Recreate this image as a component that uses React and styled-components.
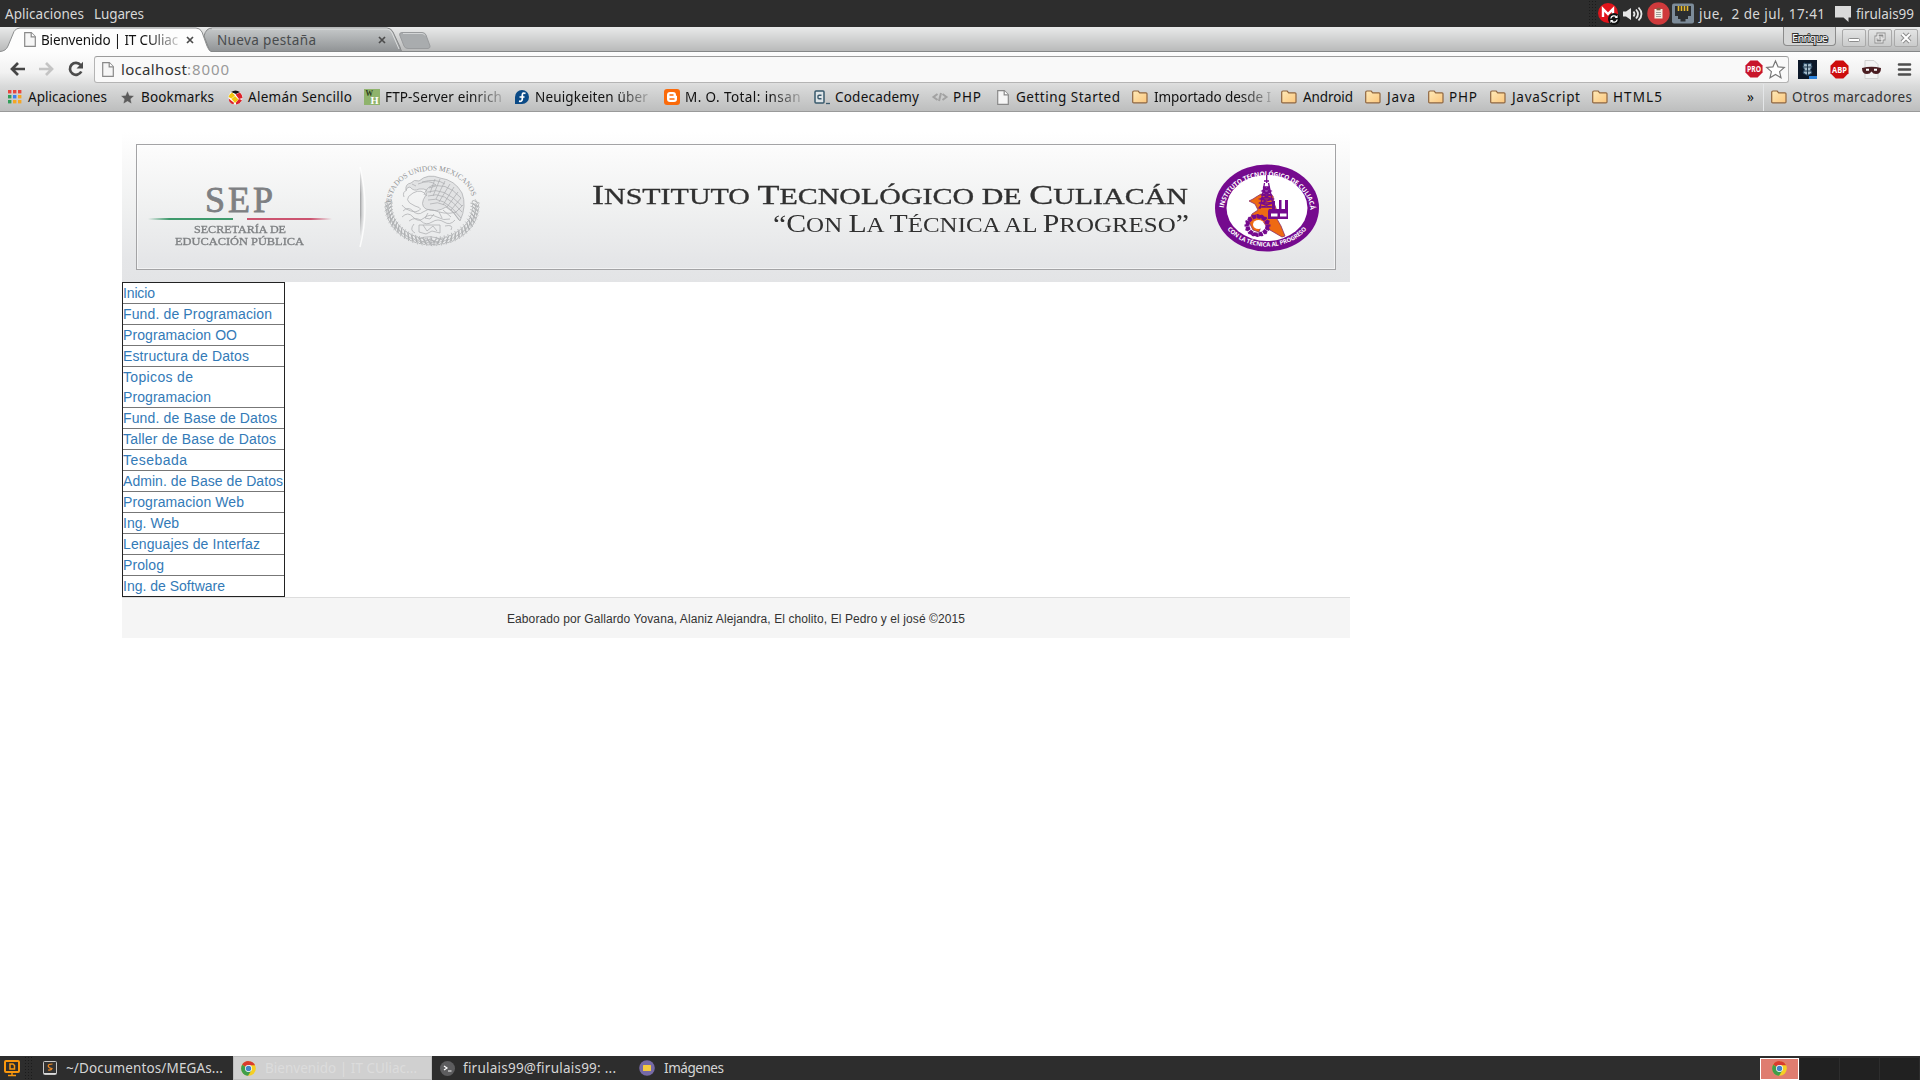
import React, { useLayoutEffect, useRef } from "react";
import styled, { createGlobalStyle, css } from "styled-components";

const Global = createGlobalStyle`
  html, body { margin: 0; padding: 0; background: #fff; }
  *, *::before, *::after { box-sizing: border-box; }
  svg { display: block; flex: none; overflow: visible; }
`;

const Screen = styled.div`
  width: 1920px;
  height: 1080px;
  overflow: hidden;
  display: flex;
  flex-direction: column;
  background: #fff;
  font-family: "Noto Sans", "Open Sans", sans-serif;
  font-size: 13.5px;
`;

/* ---------- text fitted to a known width ---------- */
const FitBox = styled.span`
  display: block;
  flex: none;
  width: ${(p) => p.$w}px;
  margin-left: ${(p) => p.$ml || 0}px;
  white-space: pre;
  color: ${(p) => p.$color || "inherit"};
  font-size: ${(p) => (p.$size ? p.$size + "px" : "inherit")};
  ${(p) => p.$fade && css`
    mask-image: linear-gradient(90deg, #000 calc(100% - 30px), rgba(0, 0, 0, 0.2) 100%);
  `}
`;
const FitInner = styled.span`
  display: inline-block;
  transform-origin: 0 50%;
`;

function Fit({ w, ml, size, color, fade, stretch, children }) {
  const ref = useRef(null);
  useLayoutEffect(() => {
    const el = ref.current;
    el.style.letterSpacing = "0px";
    el.style.transform = "none";
    const natural = el.getBoundingClientRect().width;
    const n = el.textContent.length;
    if (stretch) el.style.transform = `scaleX(${w / natural})`;
    else el.style.letterSpacing = `${(w - natural) / Math.max(1, n - (fade ? 0 : 1))}px`;
  }, [w, fade, stretch]);
  return (
    <FitBox $w={w} $ml={ml} $size={size} $color={color} $fade={fade}>
      <FitInner ref={ref}>{children}</FitInner>
    </FitBox>
  );
}

/* ---------- desktop panel ---------- */
const Panel = styled.header`
  height: 27px;
  flex: none;
  display: flex;
  align-items: flex-start;
  padding: 0 6px 0 5px;
  background: #2d2d2d;
  color: #d8d8d8;
  line-height: 29px;
`;
const Spacer = styled.div`
  flex: 1;
`;
const Tray = styled.div`
  display: flex;
  align-items: flex-start;
  height: 27px;
`;
const TrayIcon = styled.div`
  width: ${(p) => p.$w}px;
  height: 27px;
  display: flex;
  align-items: center;
  padding-left: ${(p) => p.$pl || 0}px;
`;
const Grip = styled.div`
  width: 10px;
  height: 100%;
  background-image: radial-gradient(#1b1b1b 0.8px, transparent 1px);
  background-size: 3px 3px;
`;
const Slot = styled.div`
  width: ${(p) => p.$w}px;
  flex: none;
  display: flex;
  align-items: center;
`;

const MegaIcon = () => (
  <svg width="22" height="22" viewBox="0 0 22 22">
    <circle cx="10" cy="10" r="10" fill="#e1141b" />
    <path d="M5 14V6l5 5 5-5v5" fill="none" stroke="#fff" strokeWidth="2.4" />
    <circle cx="16" cy="16" r="6" fill="#111" />
    <path d="M12.8 15.5a3.3 3.3 0 0 1 5.6-1.7M19.2 16.5a3.3 3.3 0 0 1-5.6 1.7" fill="none" stroke="#fff" strokeWidth="1.3" />
    <path d="M19.6 12v3h-3zM12.4 20v-3h3z" fill="#fff" />
  </svg>
);
const SpeakerIcon = () => (
  <svg width="20" height="16" viewBox="0 0 20 16">
    <path d="M0 5.5h3L8 2v12l-5-3.500H0z" fill="#e6e6e6" />
    <path d="M10.500 5.500q2 2.500 0 5M13 3.500q4 4.500 0 9M15.500 1.500q6 6.500 0 13" fill="none" stroke="#e6e6e6" strokeWidth="1.8" />
  </svg>
);
const ClipIcon = () => (
  <svg width="23" height="23" viewBox="0 0 23 23">
    <circle cx="11.500" cy="11.500" r="11.200" fill="#cf3a3c" />
    <rect x="7.500" y="7" width="8" height="9.500" fill="#f4f0e4" />
    <rect x="9.500" y="5.800" width="4" height="2.500" fill="#8a5a40" />
    <path d="M9 10.500h5M9 12.500h5M9 14.500h5" stroke="#888" strokeWidth="0.8" />
  </svg>
);
const EthernetIcon = () => (
  <svg width="22" height="21" viewBox="0 0 22 21">
    <rect x="0" y="0.500" width="22" height="20" rx="2" fill="#7c8b99" />
    <path d="M3 3h16v10h-3v3h-2.500v2.500h-5V16H6v-3H3z" fill="#2a2d30" />
    <path d="M6.500 3v5M9.500 3v5M12.500 3v5M15.500 3v5" stroke="#e8b92c" strokeWidth="1.600" />
  </svg>
);
const ChatIcon = () => (
  <svg width="16" height="16" viewBox="0 0 16 16">
    <path d="M0 0h16v11.500h-2.500V16L8.500 11.500H0z" fill="#dadada" />
  </svg>
);

/* ---------- tab strip ---------- */
const TabStrip = styled.div`
  height: 25px;
  flex: none;
  display: flex;
  background: linear-gradient(#e9eaea, #b9baba 96%, #858788 97%);
`;
const Tab = styled.div`
  display: grid;
  width: ${(p) => p.$w}px;
  margin-left: ${(p) => p.$ml || 0}px;
  z-index: ${(p) => (p.$front ? 2 : 1)};
  & > * { grid-area: 1 / 1; }
`;
const TabBody = styled.div`
  display: flex;
  align-items: center;
  height: 25px;
  padding-left: ${(p) => p.$pl}px;
  color: ${(p) => p.$color};
`;
const NewTab = styled.div`
  width: 32px;
  padding-top: 5px;
  margin-left: -3px;
  z-index: 1;
`;
const WindowButtons = styled.div`
  display: flex;
  align-items: flex-start;
`;
const Profile = styled.div`
  width: 53px;
  height: 19px;
  display: flex;
  padding-left: 8px;
  margin-right: 6px;
  border: 1px solid #8b8b8b;
  border-top: 0;
  border-radius: 0 0 4px 4px;
  background: #d5d6d6;
  color: #fff;
  font-size: 11px;
  line-height: 21px;
  -webkit-text-stroke: 2px #333;
  paint-order: stroke fill;
`;
const WinButton = styled.div`
  width: 24px;
  height: 18px;
  margin: 2px 2px 0 0;
  display: flex;
  align-items: center;
  justify-content: center;
  border: 1px solid #a9a9a9;
  border-radius: 2px;
  background: linear-gradient(#e3e4e4, #cacbcb);
`;
const CloseX = () => (
  <svg width="8" height="8" viewBox="0 0 8 8">
    <path d="M1 1l6 6M7 1L1 7" stroke="#4c4c4c" strokeWidth="1.700" />
  </svg>
);
const PageIcon = () => (
  <svg width="12" height="15" viewBox="0 0 12 15">
    <path d="M.7.700h6.600l4 4v9.600H.7z" fill="#f6f6f6" stroke="#898989" strokeWidth="1.200" />
    <path d="M7.200.700v4.200h4.200" fill="#fff" stroke="#898989" strokeWidth="1.200" />
  </svg>
);

/* ---------- toolbar ---------- */
const ChromeBars = styled.div`
  height: 60px;
  flex: none;
  display: flex;
  flex-direction: column;
  background: linear-gradient(#fdfdfd 0, #f1f1f1 35%, #d9dada 58%, #bdbebe 100%);
  border-bottom: 1px solid #999a9a;
`;
const Toolbar = styled.div`
  height: 31px;
  padding-top: 4px;
  display: flex;
`;
const Nav = styled.div`
  width: 94px;
  height: 26px;
  padding-left: 10px;
  display: flex;
  align-items: center;
`;
const Omnibox = styled.div`
  width: 1695px;
  height: 27px;
  display: flex;
  align-items: center;
  padding: 0 3px 1px 7px;
  border: 1px solid #b4b4b4;
  border-top-color: #9c9c9c;
  border-radius: 3px;
  background: #f9f9f9;
  line-height: 18px;
`;
const Extensions = styled.div`
  height: 27px;
  flex: 1;
  display: flex;
  align-items: center;
  padding-left: 9px;
`;
const Badge = ({ label, size, fill }) => (
  <svg width={size} height={size} viewBox="0 0 20 20">
    <path d="M6 .5h8L19.500 6v8L14 19.500H6L.5 14V6z" fill={fill} />
    <text x="2.200" y="13.500" textLength="15.600" lengthAdjust="spacingAndGlyphs" fontSize="9.500" fontWeight="700" fill="#fff" fontFamily="Open Sans">
      {label}
    </text>
  </svg>
);

/* ---------- bookmarks ---------- */
const Bookmarks = styled.div`
  height: 28px;
  display: flex;
  align-items: center;
  padding-left: 8px;
  color: #111;
`;
const Bookmark = styled.div`
  width: ${(p) => p.$w}px;
  flex: none;
  display: flex;
  align-items: center;
`;
const Divider = styled.div`
  width: 1px;
  height: 27px;
  margin-right: 7px;
  background: #e4e6e8;
`;

const Folder = () => (
  <svg width="16" height="14" viewBox="0 0 16 14">
    <defs>
      <linearGradient id="fold" x1="0" y1="0" x2="1" y2="1">
        <stop offset="0" stopColor="#ffeab8" />
        <stop offset="1" stopColor="#fbc67c" />
      </linearGradient>
    </defs>
    <path d="M.7 12V2.200Q.7 1 2 1h4.200l1.500 1.800H14q1 0 1 1V12q0 .8-1 .8H1.700q-1 0-1-.8z" fill="url(#fold)" stroke="#8f6640" strokeWidth="1.200" />
  </svg>
);
const AppsIcon = () => {
  const c = ["#e8453c", "#e8453c", "#e8453c", "#2f9e58", "#3a7ff0", "#f5a623", "#2f9e58", "#f5a623", "#f5a623"];
  return (
    <svg width="14" height="14" viewBox="0 0 14 14">
      {c.map((f, i) => (
        <rect key={i} x={(i % 3) * 5} y={Math.floor(i / 3) * 5} width="3.400" height="3.400" fill={f} />
      ))}
    </svg>
  );
};
const StarIcon = ({ size, fill, stroke, w = 1.2 }) => (
  <svg width={size} height={size} viewBox="0 0 20 20">
    <path d="M10 1l2.700 6.200 6.600.6-5 4.400 1.500 6.500L10 15.300l-5.800 3.400 1.500-6.500-5-4.400 6.600-.6z" fill={fill} stroke={stroke} strokeWidth={w} />
  </svg>
);
const BallIcon = () => (
  <svg width="15" height="15" viewBox="0 0 15 15">
    <circle cx="7.500" cy="7.500" r="7" fill="#fff" />
    <path d="M3 2Q7.500-1 12 2L8 4z" fill="#151515" />
    <path d="M.5 7Q1 4 4 2.500L7 5.500 3.500 8.500z" fill="#f3c60e" />
    <path d="M7.500 4.500l4.500-2Q14.500 5 14.500 8L11 9z" fill="#dc2229" />
    <path d="M3.500 9L7 6l3.500 3.500L7 13z" fill="#f3c60e" />
    <path d="M.7 8.500l5.500 4.500-1 1.300Q1 13 .7 8.500z" fill="#dc2229" />
    <path d="M8 12.500l3-3.500 3 1Q12 14 8 14.500z" fill="#dc2229" />
  </svg>
);
const WHIcon = () => (
  <svg width="16" height="16" viewBox="0 0 16 16" fontFamily="Liberation Serif" fontWeight="700">
    <rect width="16" height="16" fill="#8fb36c" />
    <text x="1.500" y="6.500" fontSize="7.500" fill="#2c3a20">W</text>
    <text x="6.500" y="14.500" fontSize="10.500" fill="#fff">H</text>
  </svg>
);
const FedoraIcon = () => (
  <svg width="14" height="14" viewBox="0 0 14 14">
    <path d="M7 0a7 7 0 1 1 0 14H0V7a7 7 0 0 1 7-7z" fill="#0b4a86" />
    <path d="M10.500 3.500Q7.500 2 7.300 5v4.200q-.3 2.600-3.300 2M4.500 7h5" fill="none" stroke="#fff" strokeWidth="1.700" />
  </svg>
);
const BloggerIcon = () => (
  <svg width="16" height="16" viewBox="0 0 16 16">
    <rect width="16" height="16" rx="3" fill="#fb6a0a" />
    <path d="M3 6a3 3 0 0 1 3-3h3a3 3 0 0 1 3 3q0 1 1 1v3a3 3 0 0 1-3 3H6a3 3 0 0 1-3-3z" fill="#fff" />
    <path d="M6 6h3M6 10h4" stroke="#fb6a0a" strokeWidth="1.500" strokeLinecap="round" />
  </svg>
);
const CodeIcon = () => (
  <svg width="17" height="15" viewBox="0 0 17 15">
    <rect x="1" y="1" width="9" height="12" rx="1" fill="#dfe5e8" stroke="#39596c" strokeWidth="1.500" />
    <path d="M7.500 5.200H5a1 1 0 0 0-1 1v1.600a1 1 0 0 0 1 1h2.500" fill="none" stroke="#39596c" strokeWidth="1.400" />
    <path d="M12 13.500h4" stroke="#39596c" strokeWidth="1.300" />
  </svg>
);
const TagIcon = () => (
  <svg width="16" height="10" viewBox="0 0 16 10">
    <path d="M5.500 2L1.500 5l4 3M10.500 2l4 3-4 3M9 1L7 9" fill="none" stroke="#a2a2a2" strokeWidth="2" />
  </svg>
);

const BOOKMARKS = [
  [8, 28, 107, "Aplicaciones", AppsIcon],
  [121, 141, 214, "Bookmarks", () => <StarIcon size={13} fill="#5b5b5b" stroke="#5b5b5b" w={0.4} />],
  [228, 248, 352, "Alemán Sencillo", BallIcon],
  [364, 385, 502, "FTP-Server einrich", WHIcon, true],
  [515, 535, 648, "Neuigkeiten über", FedoraIcon, true],
  [664, 685, 801, "M. O. Total: insan", BloggerIcon, true],
  [814, 835, 919, "Codecademy", CodeIcon],
  [932, 953, 981, "PHP", TagIcon],
  [997, 1016, 1120, "Getting Started", PageIcon],
  [1132, 1154, 1271, "Importado desde I", Folder, true],
  [1281, 1303, 1353, "Android", Folder],
  [1365, 1387, 1415, "Java", Folder],
  [1428, 1449, 1477, "PHP", Folder],
  [1490, 1512, 1580, "JavaScript", Folder],
  [1592, 1613, 1662, "HTML5", Folder],
];

/* ---------- page ---------- */
const Page = styled.main`
  flex: 1;
  width: 1228px;
  margin-left: 122px;
  padding-top: 20px;
  font-family: "Liberation Sans", Arial, sans-serif;
`;
const Banner = styled.div`
  height: 150px;
  padding: 12px 14px 12px 14px;
  background: linear-gradient(#fff, #fafafa 16%, #f0f1f1 50%, #e5e6e8 85%, #e3e4e6);
  font-family: "Liberation Serif", serif;
`;
const Frame = styled.div`
  height: 126px;
  display: flex;
  border: 1px solid #a3a3a5;
  box-shadow: inset 0 0 0 1px rgba(255, 255, 255, 0.5);
`;
const Sep = styled.div`
  width: 216px;
  padding: 35px 0 0 11px;
  display: flex;
  flex-direction: column;
  color: #7e8083;
`;
const SepName = styled.div`
  height: 39px;
  padding-left: 57px;
  font-size: 36px;
  line-height: 40px;
  -webkit-text-stroke: 0.8px #7e8083;
`;
const FlagLines = styled.div`
  display: flex;
  gap: 14px;
  height: 2px;
  margin: -1px 0 4px;
`;
const Flag = styled.div`
  width: 85px;
  background: linear-gradient(${(p) => p.$dir}, transparent, ${(p) => p.$c} 25%);
`;
const SepLine = styled.div`
  height: 12px;
  padding-left: ${(p) => p.$pl}px;
  line-height: 11px;
  font-size: 10.5px;
  -webkit-text-stroke: 0.3px #7e8083;
`;
const Titles = styled.div`
  width: 600px;
  margin-left: 72px;
  padding-top: 35px;
  display: flex;
  flex-direction: column;
  color: #303030;
  text-transform: uppercase;
`;
const TitleLine = styled.div`
  height: ${(p) => p.$h}px;
  line-height: ${(p) => p.$h}px;
  padding-left: ${(p) => p.$pl}px;
  font-size: ${(p) => p.$size}px;
  -webkit-text-stroke: ${(p) => p.$bold}px #303030;
`;
const Cap = styled.span`
  font-size: ${(p) => p.$size}px;
  line-height: 1px;
`;
const smallCaps = (text, size) =>
  [...text].map((ch, i) =>
    /[A-Z“”]/.test(ch) ? <Cap key={i} $size={size}>{ch}</Cap> : <React.Fragment key={i}>{ch}</React.Fragment>
  );

const Swoosh = () => (
  <svg width="18" height="84" viewBox="0 0 18 84">
    <defs>
      <linearGradient id="sw" x1="0" x2="1"><stop offset="0" stopColor="#9b9c9e" /><stop offset="1" stopColor="#e9eaea" stopOpacity="0" /></linearGradient>
      <linearGradient id="sv" x1="0" x2="0" y1="0" y2="1"><stop offset="0" stopColor="#fff" stopOpacity="0" /><stop offset=".35" stopColor="#fff" /><stop offset=".6" stopColor="#fff" /><stop offset=".85" stopColor="#fff" stopOpacity="0" /></linearGradient>
      <mask id="sm"><rect width="18" height="84" fill="url(#sv)" /></mask>
    </defs>
    <path d="M7 2Q17 38 7 74z" fill="url(#sw)" mask="url(#sm)" />
    <path d="M7 2Q17 44 7 82" fill="none" stroke="#fff" strokeWidth="1.500" opacity=".8" />
  </svg>
);

const Seal = () => {
  const leaves = [];
  for (let i = 0; i <= 32; i++) {
    const a = ((-4 + i * 5.9) * Math.PI) / 180;
    leaves.push(
      <g key={i} transform={`translate(${49 + 43.5 * Math.cos(a)} ${42 + 36 * Math.sin(a)}) rotate(${(a * 180) / Math.PI + (i < 16 ? 45 : 130)})`}>
        <ellipse rx="4" ry="1.800" />
        <path d="M-4 3q4-3 7 0M-3-3q3 2 6 0" />
      </g>
    );
  }
  return (
    <svg width="98" height="84" viewBox="0 0 98 84" fill="none" stroke="#acaeb0" strokeWidth=".75">
      <defs><path id="sealArc" d="M8 40A41 33.500 0 0 1 90 40" /></defs>
      <text fontFamily="Liberation Serif" fontSize="7.400" fill="#8f9193" stroke="none">
        <textPath href="#sealArc" startOffset="1">ESTADOS UNIDOS MEXICANOS</textPath>
      </text>
      {leaves}
      <path d="M36 17Q45 9 57 14Q72 16 79 29Q84 42 77 57Q72 48 63 43Q54 49 43 45Q36 41 43 31Q47 24 36 25Q31 28 27 23Q24 23 23 26Q22 20 28 19Q31 15 36 17z" fill="#e2e3e4" />
      <path d="M44 32Q39 24 30 29Q18 36 32 42Q43 45 32 48Q22 46 19 41M24 26q-5 2-3 7M29 20l4 2M35 20q12-5 18 1q-9 0-12 10M39 18q14-4 23 2M46 24Q62 16 78 34M45 28Q60 22 79 42M45 32Q61 26 79 48M45 36Q60 31 78 54M47 40Q62 34 76 56M52 15l-5 14M57 15l-7 17M62 17l-9 18M67 20L56 38M71 23L60 41M75 28L64 43M78 34L68 46M80 41L72 49" />
      <path d="M20 47q5-5 10 0t10 1 10-2 11 3 12-1M19 53q6-6 11 0t11 1 13-1 13 2M26 57q7-5 12 0t11 1 12 0 11-2M36 61h21v8l-8-2-6 3-7-2zM40 61l4 6 6-5 4 5M31 60q-5 6 1 9M62 62q9-2 6 4M45 49l-3 5 5 1 4-5M60 46l8 7M56 48l3 6" />
      <path d="M35 75q12-5 25 1M37 79q10-6 19 0M48 72v10" />
    </svg>
  );
};

const ItcLogo = () => {
  const teeth = [];
  for (let i = 0; i < 16; i++) {
    const a = (i * 22.5 * Math.PI) / 180;
    teeth.push(<path key={i} d={`M${43.5 + 9 * Math.cos(a)} ${62.5 + 8 * Math.sin(a)}L${43.5 + 13 * Math.cos(a)} ${62.5 + 11.5 * Math.sin(a)}`} />);
  }
  return (
    <svg width="106" height="90" viewBox="0 0 106 90">
      <defs>
        <path id="itcTop" d="M9.500 49A43.500 36 0 1 1 96.500 49" />
        <path id="itcBottom" d="M11.500 64A48.500 40.500 0 0 0 94.500 64" />
      </defs>
      <ellipse cx="53" cy="45" rx="52" ry="43.500" fill="#750a8e" />
      <ellipse cx="53" cy="45" rx="40.500" ry="33" fill="#fff" />
      <g fill="#fff" fontFamily="Open Sans" fontWeight="700">
        <text fontSize="6.500"><textPath href="#itcTop" textLength="124" startOffset="4">INSTITUTO TECNOLÓGICO DE CULIACÁN</textPath></text>
        <text fontSize="6"><textPath href="#itcBottom" startOffset="3" textLength="89">CON LA TÉCNICA AL PROGRESO</textPath></text>
      </g>
      <path d="M35 38l4-2 3-2 5-3h9l3 2 1 7 3 8v8l4 7 4 10-3 1-12-7-7-8-4 10-6-2-4-8 3-8 6-4-3-6z" fill="#ee6a13" stroke="#8a2d68" strokeWidth=".8" />
      <g fill="none" stroke="#750a8e">
        <ellipse cx="43.500" cy="62.500" rx="10" ry="9" strokeWidth="4" strokeDasharray="4 .9" />
        <ellipse cx="44.500" cy="61.500" rx="5.500" ry="4.500" fill="#fff" stroke="none" />
        <g strokeWidth="2.200">{teeth}</g>
        <path d="M52.700 12v8M50 18h5M50.500 20L46 46M54.500 20L60 46M49 24h7M48 28h9M47 32h11M46 36h13M45 40h14M45 44h15M49 24l8 4-9 4 11 4-13 4 15 5M56 24l-8 4 9 4-11 4 13 4-15 5" strokeWidth="1.300" />
      </g>
      <path d="M55 46h3V38h3v8h4V37h2.500v9H71V37h3v19H54v-8z" fill="#750a8e" />
      <path d="M57 50.500h6.500v3H57zM66 50.500h6.500v3H66z" fill="#fff" />
    </svg>
  );
};
const Shift = styled.div`
  padding: ${(p) => p.$pad};
`;

const Menu = styled.nav`
  width: 163px;
  border: 1px solid #222;
  display: flex;
  flex-direction: column;
`;
const MenuItem = styled.a`
  display: flex;
  flex-direction: column;
  font-size: 14px;
  line-height: 20px;
  color: #337ab7;
  border-bottom: 1px solid #777;
  &:last-child { border-bottom: 0; }
`;
const Footer = styled.footer`
  height: 41px;
  display: flex;
  justify-content: center;
  background: #f5f5f5;
  border-top: 1px solid #ddd;
  color: #333;
  font-size: 12px;
  line-height: 42px;
`;

const MENU = [
  [["Inicio", 32]],
  [["Fund. de Programacion", 149]],
  [["Programacion OO", 114]],
  [["Estructura de Datos", 126]],
  [["Topicos de", 70], ["Programacion", 88]],
  [["Fund. de Base de Datos", 154]],
  [["Taller de Base de Datos", 153]],
  [["Tesebada", 64]],
  [["Admin. de Base de Datos", 160]],
  [["Programacion Web", 121]],
  [["Ing. Web", 56]],
  [["Lenguajes de Interfaz", 137]],
  [["Prolog", 41]],
  [["Ing. de Software", 102]],
];

/* ---------- taskbar ---------- */
const Taskbar = styled.footer`
  height: 24px;
  flex: none;
  display: flex;
  align-items: center;
  background: #2d2d2d;
  color: #d6d6d6;
  line-height: 24px;
`;
const Task = styled.div`
  width: ${(p) => p.$w}px;
  height: 24px;
  padding-left: ${(p) => p.$pl}px;
  display: flex;
  align-items: center;
  ${(p) => p.$active && css`
    background: #d0d0d0;
    border: 1px solid #bdbdbd;
    color: #dcdcdc;
  `}
`;
const Workspace = styled.div`
  width: 39px;
  height: 22px;
  margin: 1px 1px 0 0;
  display: flex;
  align-items: center;
  justify-content: center;
  background: ${(p) => (p.$active ? "#df7d70" : "#212121")};
  border: ${(p) => (p.$active ? "1px solid #fff" : "0")};
`;
const ChromeIcon = () => (
  <svg width="15" height="15" viewBox="0 0 16 16">
    <circle cx="8" cy="8" r="7.800" fill="#f5cf24" />
    <path d="M8 8L1.200 4.100A7.800 7.800 0 0 1 15 4.500H8z" fill="#d93a2f" />
    <path d="M1.200 4.100A7.800 7.800 0 0 0 7.500 15.800L11 10 8 8z" fill="#3f9e4b" />
    <circle cx="8" cy="8" r="3.700" fill="#fff" />
    <circle cx="8" cy="8" r="2.900" fill="#4383c9" />
  </svg>
);

export default function App() {
  return (
    <Screen>
      <Global />
      <Panel>
        <Fit w={79}>Aplicaciones</Fit>
        <Fit w={50} ml={10}>Lugares</Fit>
        <Spacer />
        <Tray>
          <Grip />
          <TrayIcon $w={25}><MegaIcon /></TrayIcon>
          <TrayIcon $w={24}><SpeakerIcon /></TrayIcon>
          <TrayIcon $w={25}><ClipIcon /></TrayIcon>
          <TrayIcon $w={27}><EthernetIcon /></TrayIcon>
          <Fit w={126}>jue,  2 de jul, 17:41</Fit>
          <TrayIcon $w={31} $pl={10}><ChatIcon /></TrayIcon>
          <Fit w={58}>firulais99</Fit>
        </Tray>
      </Panel>

      <TabStrip>
        <Tab $w={211} $front>
          <svg width="211" height="25" viewBox="0 0 211 25">
            <path d="M0 24.500Q6 24 8 19L14 4.500Q16 1 20 1H196Q200 1 202 5L207 19Q209 24 211 24.500V25H0z" fill="#fdfdfd" />
            <path d="M0 24.500Q6 24 8 19L14 4.500Q16 1 20 1H196Q200 1 202 5L207 19Q209 24 211 24.500" fill="none" stroke="#8c8e8f" />
          </svg>
          <TabBody $pl={24} $color="#111">
            <PageIcon />
            <Fit w={137} ml={5} fade>Bienvenido | IT CUliac</Fit>
            <Shift $pad="0 0 0 8px"><CloseX /></Shift>
          </TabBody>
        </Tab>
        <Tab $w={198} $ml={-7}>
          <svg width="198" height="25" viewBox="0 0 198 25">
            <defs><linearGradient id="tb" x2="0" y2="1"><stop stopColor="#c6c9ca" /><stop offset="1" stopColor="#909395" /></linearGradient></defs>
            <path d="M0 9Q2 1 8 1H183Q187 1 189 5L196 20Q197 24 198 24.500H6z" fill="url(#tb)" stroke="#858788" />
            <path d="M8 2H183Q186 2 188 6L195 22" fill="none" stroke="#dcdede" />
          </svg>
          <TabBody $pl={13} $color="#484b4d">
            <Fit w={99}>Nueva pestaña</Fit>
            <Shift $pad="0 0 0 62px"><CloseX /></Shift>
          </TabBody>
        </Tab>
        <NewTab>
          <svg width="32" height="17" viewBox="0 0 32 17">
            <path d="M3 .5H23Q26 .5 27 3L31 14Q31.500 16 29 16.500H9Q6 16.500 5 14L.7 3Q0 .8 3 .5z" fill="#a9acae" stroke="#999b9d" />
            <path d="M4 1.500H23Q25 1.500 26 3.500" fill="none" stroke="#d3d5d6" />
          </svg>
        </NewTab>
        <Spacer />
        <WindowButtons>
          <Profile><Fit w={36}>Enrique</Fit></Profile>
          <WinButton><svg width="12" height="12"><rect x=".5" y="6.500" width="11" height="3" rx="1" fill="#fff" stroke="#8d8d8d" /></svg></WinButton>
          <WinButton>
            <svg width="12" height="12" fill="none" stroke="#8d8d8d" strokeWidth="3"><path d="M4 2h6v5H4zM2 5h6v5H2z" /><path d="M4 2h6v5H4zM2 5h6v5H2z" stroke="#f4f4f4" strokeWidth="1.200" /></svg>
          </WinButton>
          <WinButton>
            <svg width="12" height="12" fill="none" stroke="#8d8d8d" strokeWidth="4"><path d="M2 2l8 8M10 2l-8 8" /><path d="M2 2l8 8M10 2l-8 8" stroke="#fff" strokeWidth="2" /></svg>
          </WinButton>
        </WindowButtons>
      </TabStrip>

      <ChromeBars>
        <Toolbar>
          <Nav>
            <Slot $w={29}><svg width="15" height="14" viewBox="0 0 15 14" fill="none" stroke="#454545" strokeWidth="2.700"><path d="M15 7H2.500M8 1L2 7l6 6" /></svg></Slot>
            <Slot $w={29}><svg width="15" height="14" viewBox="0 0 15 14" fill="none" stroke="#c4c4c4" strokeWidth="2.700"><path d="M0 7h12.500M7 1l6 6-6 6" /></svg></Slot>
            <svg width="16" height="16" viewBox="0 0 16 16"><path d="M12.600 4A6 6 0 1 0 13.300 10.500" fill="none" stroke="#4b4b4b" strokeWidth="2.700" /><path d="M15 .8V7.500H8.500z" fill="#4b4b4b" /></svg>
          </Nav>
          <Omnibox>
            <PageIcon />
            <Fit w={66} ml={7} size={15} color="#333">localhost</Fit>
            <Fit w={42} size={15} color="#999">:8000</Fit>
            <Spacer />
            <Badge label="PRO" size={18} fill="#c8152a" />
            <Shift $pad="0 0 0 3px"><StarIcon size={19} fill="#fff" stroke="#777" /></Shift>
          </Omnibox>
          <Extensions>
            <Slot $w={32}>
              <svg width="19" height="19" viewBox="0 0 19 19">
                <rect width="19" height="19" fill="#0c1828" />
                <path d="M6 3l3.500 1L13 3l1 4-1.500 2.500L14 13l-4.500 2.500L5 13l1.500-3.500L5 7z" fill="#a4bac9" stroke="#24435e" />
                <path d="M9.500 3v13M6 7h7M6 11h7" stroke="#1c3549" /><rect x="11" y="16" width="8" height="3" fill="#2a80d8" />
              </svg>
            </Slot>
            <Slot $w={32}><Badge label="ABP" size={19} fill="#cd0d0d" /></Slot>
            <Slot $w={36}>
              <svg width="19" height="19" viewBox="0 0 19 19">
                <path d="M3 .5h9l4 4v14H3z" fill="#f2f2f2" stroke="#cfcfcf" />
                <path d="M0 8Q9.500 5.500 19 8Q19 14 14 14Q11 14 9.500 11.500Q8 14 5 14Q0 14 0 8z" fill="#4a1d21" />
                <path d="M4 9.800h3M12 9.800h3" stroke="#fff" strokeWidth="2" />
              </svg>
            </Slot>
            <svg width="13" height="13" viewBox="0 0 13 13"><path d="M1 1.500h11M1 6.500h11M1 11.500h11" stroke="#4e4e4e" strokeWidth="2.600" strokeLinecap="round" /></svg>
          </Extensions>
        </Toolbar>
        <Bookmarks>
          {BOOKMARKS.map(([x, tx, te, label, Icon, fade], i) => (
            <Bookmark key={i} $w={(BOOKMARKS[i + 1] ? BOOKMARKS[i + 1][0] : 1747) - x}>
              <Slot $w={tx - x}><Icon /></Slot>
              <Fit w={te - tx} fade={fade}>{label}</Fit>
            </Bookmark>
          ))}
          <Slot $w={16}>»</Slot>
          <Divider />
          <Slot $w={21}><Folder /></Slot>
          <Fit w={120} color="#333">Otros marcadores</Fit>
        </Bookmarks>
      </ChromeBars>

      <Page>
        <Banner>
          <Frame>
            <Sep>
              <SepName><Fit w={68}>SEP</Fit></SepName>
              <FlagLines>
                <Flag $dir="90deg" $c="#3f9a6c" />
                <Flag $dir="270deg" $c="#cc5470" />
              </FlagLines>
              <SepLine $pl={46}><Fit w={92} stretch>SECRETARÍA DE</Fit></SepLine>
              <SepLine $pl={27}><Fit w={129} stretch>EDUCACIÓN PÚBLICA</Fit></SepLine>
            </Sep>
            <Shift $pad="20px 12px 0 0"><Swoosh /></Shift>
            <Shift $pad="19px 0 0 0"><Seal /></Shift>
            <Titles>
              <TitleLine $h={33} $pl={39} $size={22.5} $bold={0.3}>
                <Fit w={596} stretch>{smallCaps("Instituto Tecnológico de Culiacán", 27)}</Fit>
              </TitleLine>
              <TitleLine $h={24} $pl={220} $size={20.5} $bold={0}>
                <Fit w={416} stretch>{smallCaps("“Con La Técnica al Progreso”", 24.5)}</Fit>
              </TitleLine>
            </Titles>
            <Shift $pad="18px 0 0 61px"><ItcLogo /></Shift>
          </Frame>
        </Banner>
        <Menu>
          {MENU.map((lines) => (
            <MenuItem key={lines[0][0]}>
              {lines.map(([text, w]) => <Fit key={text} w={w}>{text}</Fit>)}
            </MenuItem>
          ))}
        </Menu>
        <Footer><Fit w={458}>Eaborado por Gallardo Yovana, Alaniz Alejandra, El cholito, El Pedro y el josé ©2015</Fit></Footer>
      </Page>

      <Taskbar>
        <Shift $pad="0 4px 0 4px">
          <svg width="16" height="17" viewBox="0 0 16 17" fill="none" stroke="#f8960d" strokeWidth="2">
            <rect x="1" y="1" width="14" height="11" rx="1" /><path d="M6 4h3l1.500 1.500V9H6zM4 15.500h8M8 12v3" strokeWidth="1.500" />
          </svg>
        </Shift>
        <Grip />
        <Task $w={199} $pl={9}>
          <Slot $w={23}>
            <svg width="14" height="14"><rect x=".5" y=".5" width="13" height="13" rx="1" fill="#333" stroke="#c7c7c7" /><path d="M9.500 3Q5 3 5.200 5T9 7.500Q8.500 9.500 5 9" fill="none" stroke="#ef8b25" strokeWidth="1.200" /><path d="M1 12.500h12" stroke="#ddd" /></svg>
          </Slot>
          <Fit w={157}>~/Documentos/MEGAs...</Fit>
        </Task>
        <Task $w={199} $pl={7} $active>
          <Slot $w={24}><ChromeIcon /></Slot>
          <Fit w={152}>Bienvenido | IT CUliac...</Fit>
        </Task>
        <Task $w={199} $pl={8}>
          <Slot $w={23}>
            <svg width="15" height="15"><circle cx="7.500" cy="7.500" r="7.500" fill="#5d5d5f" /><path d="M4 5l3 2-3 2M8 10h3.500" fill="none" stroke="#fff" strokeWidth="1.200" /></svg>
          </Slot>
          <Fit w={153}>firulais99@firulais99: ...</Fit>
        </Task>
        <Task $w={120} $pl={8}>
          <Slot $w={25}>
            <svg width="16" height="16"><circle cx="8" cy="8" r="7.800" fill="#766aa6" /><rect x="4" y="5" width="8" height="6" rx=".5" fill="#f6ca3e" /></svg>
          </Slot>
          <Fit w={60}>Imágenes</Fit>
        </Task>
        <Spacer />
        <Workspace $active><ChromeIcon /></Workspace>
        <Workspace />
        <Workspace />
        <Workspace />
      </Taskbar>
    </Screen>
  );
}
